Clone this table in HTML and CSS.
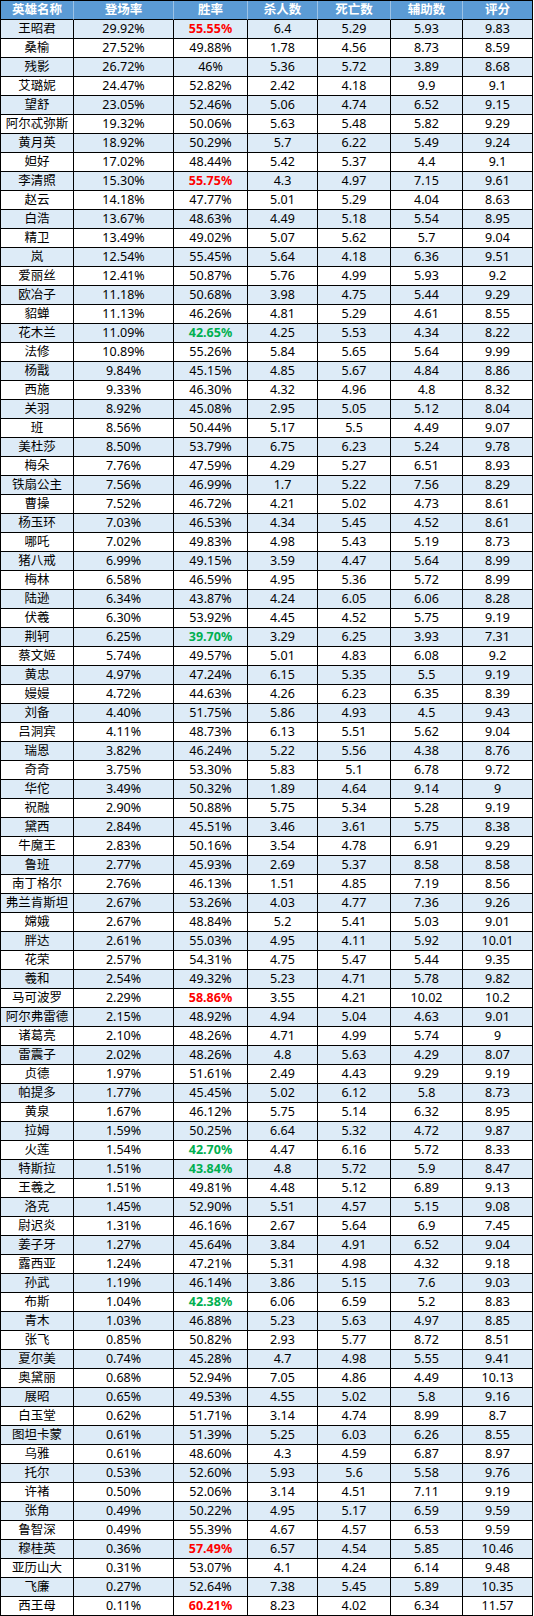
FILE: index.html
```html
<!DOCTYPE html>
<html lang="zh-CN">
<head>
<meta charset="utf-8">
<title>英雄数据</title>
<link rel="stylesheet" href="styles.css">
</head>
<body>
<div class="sheet">
<div class="row head"><div>英雄名称</div><div>登场率</div><div>胜率</div><div>杀人数</div><div>死亡数</div><div>辅助数</div><div>评分</div></div>
<div class="row alt"><div>王昭君</div><div>29.92%</div><div class="up">55.55%</div><div>6.4</div><div>5.29</div><div>5.93</div><div>9.83</div></div>
<div class="row"><div>桑榆</div><div>27.52%</div><div>49.88%</div><div>1.78</div><div>4.56</div><div>8.73</div><div>8.59</div></div>
<div class="row alt"><div>残影</div><div>26.72%</div><div>46%</div><div>5.36</div><div>5.72</div><div>3.89</div><div>8.68</div></div>
<div class="row"><div>艾璐妮</div><div>24.47%</div><div>52.82%</div><div>2.42</div><div>4.18</div><div>9.9</div><div>9.1</div></div>
<div class="row alt"><div>望舒</div><div>23.05%</div><div>52.46%</div><div>5.06</div><div>4.74</div><div>6.52</div><div>9.15</div></div>
<div class="row"><div>阿尔忒弥斯</div><div>19.32%</div><div>50.06%</div><div>5.63</div><div>5.48</div><div>5.82</div><div>9.29</div></div>
<div class="row alt"><div>黄月英</div><div>18.92%</div><div>50.29%</div><div>5.7</div><div>6.22</div><div>5.49</div><div>9.24</div></div>
<div class="row"><div>妲好</div><div>17.02%</div><div>48.44%</div><div>5.42</div><div>5.37</div><div>4.4</div><div>9.1</div></div>
<div class="row alt"><div>李清照</div><div>15.30%</div><div class="up">55.75%</div><div>4.3</div><div>4.97</div><div>7.15</div><div>9.61</div></div>
<div class="row"><div>赵云</div><div>14.18%</div><div>47.77%</div><div>5.01</div><div>5.29</div><div>4.04</div><div>8.63</div></div>
<div class="row alt"><div>白浩</div><div>13.67%</div><div>48.63%</div><div>4.49</div><div>5.18</div><div>5.54</div><div>8.95</div></div>
<div class="row"><div>精卫</div><div>13.49%</div><div>49.02%</div><div>5.07</div><div>5.62</div><div>5.7</div><div>9.04</div></div>
<div class="row alt"><div>岚</div><div>12.54%</div><div>55.45%</div><div>5.64</div><div>4.18</div><div>6.36</div><div>9.51</div></div>
<div class="row"><div>爱丽丝</div><div>12.41%</div><div>50.87%</div><div>5.76</div><div>4.99</div><div>5.93</div><div>9.2</div></div>
<div class="row alt"><div>欧冶子</div><div>11.18%</div><div>50.68%</div><div>3.98</div><div>4.75</div><div>5.44</div><div>9.29</div></div>
<div class="row"><div>貂蝉</div><div>11.13%</div><div>46.26%</div><div>4.81</div><div>5.29</div><div>4.61</div><div>8.55</div></div>
<div class="row alt"><div>花木兰</div><div>11.09%</div><div class="down">42.65%</div><div>4.25</div><div>5.53</div><div>4.34</div><div>8.22</div></div>
<div class="row"><div>法修</div><div>10.89%</div><div>55.26%</div><div>5.84</div><div>5.65</div><div>5.64</div><div>9.99</div></div>
<div class="row alt"><div>杨戬</div><div>9.84%</div><div>45.15%</div><div>4.85</div><div>5.67</div><div>4.84</div><div>8.86</div></div>
<div class="row"><div>西施</div><div>9.33%</div><div>46.30%</div><div>4.32</div><div>4.96</div><div>4.8</div><div>8.32</div></div>
<div class="row alt"><div>关羽</div><div>8.92%</div><div>45.08%</div><div>2.95</div><div>5.05</div><div>5.12</div><div>8.04</div></div>
<div class="row"><div>班</div><div>8.56%</div><div>50.44%</div><div>5.17</div><div>5.5</div><div>4.49</div><div>9.07</div></div>
<div class="row alt"><div>美杜莎</div><div>8.50%</div><div>53.79%</div><div>6.75</div><div>6.23</div><div>5.24</div><div>9.78</div></div>
<div class="row"><div>梅朵</div><div>7.76%</div><div>47.59%</div><div>4.29</div><div>5.27</div><div>6.51</div><div>8.93</div></div>
<div class="row alt"><div>铁扇公主</div><div>7.56%</div><div>46.99%</div><div>1.7</div><div>5.22</div><div>7.56</div><div>8.29</div></div>
<div class="row"><div>曹操</div><div>7.52%</div><div>46.72%</div><div>4.21</div><div>5.02</div><div>4.73</div><div>8.61</div></div>
<div class="row alt"><div>杨玉环</div><div>7.03%</div><div>46.53%</div><div>4.34</div><div>5.45</div><div>4.52</div><div>8.61</div></div>
<div class="row"><div>哪吒</div><div>7.02%</div><div>49.83%</div><div>4.98</div><div>5.43</div><div>5.19</div><div>8.73</div></div>
<div class="row alt"><div>猪八戒</div><div>6.99%</div><div>49.15%</div><div>3.59</div><div>4.47</div><div>5.64</div><div>8.99</div></div>
<div class="row"><div>梅林</div><div>6.58%</div><div>46.59%</div><div>4.95</div><div>5.36</div><div>5.72</div><div>8.99</div></div>
<div class="row alt"><div>陆逊</div><div>6.34%</div><div>43.87%</div><div>4.24</div><div>6.05</div><div>6.06</div><div>8.28</div></div>
<div class="row"><div>伏羲</div><div>6.30%</div><div>53.92%</div><div>4.45</div><div>4.52</div><div>5.75</div><div>9.19</div></div>
<div class="row alt"><div>荆轲</div><div>6.25%</div><div class="down">39.70%</div><div>3.29</div><div>6.25</div><div>3.93</div><div>7.31</div></div>
<div class="row"><div>蔡文姬</div><div>5.74%</div><div>49.57%</div><div>5.01</div><div>4.83</div><div>6.08</div><div>9.2</div></div>
<div class="row alt"><div>黄忠</div><div>4.97%</div><div>47.24%</div><div>6.15</div><div>5.35</div><div>5.5</div><div>9.19</div></div>
<div class="row"><div>嫚嫚</div><div>4.72%</div><div>44.63%</div><div>4.26</div><div>6.23</div><div>6.35</div><div>8.39</div></div>
<div class="row alt"><div>刘备</div><div>4.40%</div><div>51.75%</div><div>5.86</div><div>4.93</div><div>4.5</div><div>9.43</div></div>
<div class="row"><div>吕洞宾</div><div>4.11%</div><div>48.73%</div><div>6.13</div><div>5.51</div><div>5.62</div><div>9.04</div></div>
<div class="row alt"><div>瑞恩</div><div>3.82%</div><div>46.24%</div><div>5.22</div><div>5.56</div><div>4.38</div><div>8.76</div></div>
<div class="row"><div>奇奇</div><div>3.75%</div><div>53.30%</div><div>5.83</div><div>5.1</div><div>6.78</div><div>9.72</div></div>
<div class="row alt"><div>华佗</div><div>3.49%</div><div>50.32%</div><div>1.89</div><div>4.64</div><div>9.14</div><div>9</div></div>
<div class="row"><div>祝融</div><div>2.90%</div><div>50.88%</div><div>5.75</div><div>5.34</div><div>5.28</div><div>9.19</div></div>
<div class="row alt"><div>黛西</div><div>2.84%</div><div>45.51%</div><div>3.46</div><div>3.61</div><div>5.75</div><div>8.38</div></div>
<div class="row"><div>牛魔王</div><div>2.83%</div><div>50.16%</div><div>3.54</div><div>4.78</div><div>6.91</div><div>9.29</div></div>
<div class="row alt"><div>鲁班</div><div>2.77%</div><div>45.93%</div><div>2.69</div><div>5.37</div><div>8.58</div><div>8.58</div></div>
<div class="row"><div>南丁格尔</div><div>2.76%</div><div>46.13%</div><div>1.51</div><div>4.85</div><div>7.19</div><div>8.56</div></div>
<div class="row alt"><div>弗兰肯斯坦</div><div>2.67%</div><div>53.26%</div><div>4.03</div><div>4.77</div><div>7.36</div><div>9.26</div></div>
<div class="row"><div>嫦娥</div><div>2.67%</div><div>48.84%</div><div>5.2</div><div>5.41</div><div>5.03</div><div>9.01</div></div>
<div class="row alt"><div>胖达</div><div>2.61%</div><div>55.03%</div><div>4.95</div><div>4.11</div><div>5.92</div><div>10.01</div></div>
<div class="row"><div>花荣</div><div>2.57%</div><div>54.31%</div><div>4.75</div><div>5.47</div><div>5.44</div><div>9.35</div></div>
<div class="row alt"><div>羲和</div><div>2.54%</div><div>49.32%</div><div>5.23</div><div>4.71</div><div>5.78</div><div>9.82</div></div>
<div class="row"><div>马可波罗</div><div>2.29%</div><div class="up">58.86%</div><div>3.55</div><div>4.21</div><div>10.02</div><div>10.2</div></div>
<div class="row alt"><div>阿尔弗雷德</div><div>2.15%</div><div>48.92%</div><div>4.94</div><div>5.04</div><div>4.63</div><div>9.01</div></div>
<div class="row"><div>诸葛亮</div><div>2.10%</div><div>48.26%</div><div>4.71</div><div>4.99</div><div>5.74</div><div>9</div></div>
<div class="row alt"><div>雷震子</div><div>2.02%</div><div>48.26%</div><div>4.8</div><div>5.63</div><div>4.29</div><div>8.07</div></div>
<div class="row"><div>贞德</div><div>1.97%</div><div>51.61%</div><div>2.49</div><div>4.43</div><div>9.29</div><div>9.19</div></div>
<div class="row alt"><div>帕提多</div><div>1.77%</div><div>45.45%</div><div>5.02</div><div>6.12</div><div>5.8</div><div>8.73</div></div>
<div class="row"><div>黄泉</div><div>1.67%</div><div>46.12%</div><div>5.75</div><div>5.14</div><div>6.32</div><div>8.95</div></div>
<div class="row alt"><div>拉姆</div><div>1.59%</div><div>50.25%</div><div>6.64</div><div>5.32</div><div>4.72</div><div>9.87</div></div>
<div class="row"><div>火莲</div><div>1.54%</div><div class="down">42.70%</div><div>4.47</div><div>6.16</div><div>5.72</div><div>8.33</div></div>
<div class="row alt"><div>特斯拉</div><div>1.51%</div><div class="down">43.84%</div><div>4.8</div><div>5.72</div><div>5.9</div><div>8.47</div></div>
<div class="row"><div>王羲之</div><div>1.51%</div><div>49.81%</div><div>4.48</div><div>5.12</div><div>6.89</div><div>9.13</div></div>
<div class="row alt"><div>洛克</div><div>1.45%</div><div>52.90%</div><div>5.51</div><div>4.57</div><div>5.15</div><div>9.08</div></div>
<div class="row"><div>尉迟炎</div><div>1.31%</div><div>46.16%</div><div>2.67</div><div>5.64</div><div>6.9</div><div>7.45</div></div>
<div class="row alt"><div>姜子牙</div><div>1.27%</div><div>45.64%</div><div>3.84</div><div>4.91</div><div>6.52</div><div>9.04</div></div>
<div class="row"><div>露西亚</div><div>1.24%</div><div>47.21%</div><div>5.31</div><div>4.98</div><div>4.32</div><div>9.18</div></div>
<div class="row alt"><div>孙武</div><div>1.19%</div><div>46.14%</div><div>3.86</div><div>5.15</div><div>7.6</div><div>9.03</div></div>
<div class="row"><div>布斯</div><div>1.04%</div><div class="down">42.38%</div><div>6.06</div><div>6.59</div><div>5.2</div><div>8.83</div></div>
<div class="row alt"><div>青木</div><div>1.03%</div><div>46.88%</div><div>5.23</div><div>5.63</div><div>4.97</div><div>8.85</div></div>
<div class="row"><div>张飞</div><div>0.85%</div><div>50.82%</div><div>2.93</div><div>5.77</div><div>8.72</div><div>8.51</div></div>
<div class="row alt"><div>夏尔美</div><div>0.74%</div><div>45.28%</div><div>4.7</div><div>4.98</div><div>5.55</div><div>9.41</div></div>
<div class="row"><div>奥黛丽</div><div>0.68%</div><div>52.94%</div><div>7.05</div><div>4.86</div><div>4.49</div><div>10.13</div></div>
<div class="row alt"><div>展昭</div><div>0.65%</div><div>49.53%</div><div>4.55</div><div>5.02</div><div>5.8</div><div>9.16</div></div>
<div class="row"><div>白玉堂</div><div>0.62%</div><div>51.71%</div><div>3.14</div><div>4.74</div><div>8.99</div><div>8.7</div></div>
<div class="row alt"><div>图坦卡蒙</div><div>0.61%</div><div>51.39%</div><div>5.25</div><div>6.03</div><div>6.26</div><div>8.55</div></div>
<div class="row"><div>乌雅</div><div>0.61%</div><div>48.60%</div><div>4.3</div><div>4.59</div><div>6.87</div><div>8.97</div></div>
<div class="row alt"><div>托尔</div><div>0.53%</div><div>52.60%</div><div>5.93</div><div>5.6</div><div>5.58</div><div>9.76</div></div>
<div class="row"><div>许褚</div><div>0.50%</div><div>52.06%</div><div>3.14</div><div>4.51</div><div>7.11</div><div>9.19</div></div>
<div class="row alt"><div>张角</div><div>0.49%</div><div>50.22%</div><div>4.95</div><div>5.17</div><div>6.59</div><div>9.59</div></div>
<div class="row"><div>鲁智深</div><div>0.49%</div><div>55.39%</div><div>4.67</div><div>4.57</div><div>6.53</div><div>9.59</div></div>
<div class="row alt"><div>穆桂英</div><div>0.36%</div><div class="up">57.49%</div><div>6.57</div><div>4.54</div><div>5.85</div><div>10.46</div></div>
<div class="row"><div>亚历山大</div><div>0.31%</div><div>53.07%</div><div>4.1</div><div>4.24</div><div>6.14</div><div>9.48</div></div>
<div class="row alt"><div>飞廉</div><div>0.27%</div><div>52.64%</div><div>7.38</div><div>5.45</div><div>5.89</div><div>10.35</div></div>
<div class="row"><div>西王母</div><div>0.11%</div><div class="up">60.21%</div><div>8.23</div><div>4.02</div><div>6.34</div><div>11.57</div></div>
</div>
</body>
</html>
```

FILE: styles.css
```css
html, body {
  margin: 0;
  padding: 0;
  background: #ffffff;
}

.sheet {
  width: 533px;
  box-sizing: border-box;
  border-left: 1px solid #000;
  border-top: 1px solid #000;
  font-family: "Noto Sans", "Noto Sans CJK SC", sans-serif;
  font-size: 12.5px;
  color: #000;
}

.row {
  display: grid;
  grid-template-columns: 73px 100px 74px 70px 73px 72px 70px;
  height: 19px;
}

.row > div {
  box-sizing: border-box;
  height: 19px;
  border-right: 1px solid #000;
  border-bottom: 1px solid #000;
  display: flex;
  align-items: center;
  justify-content: center;
  line-height: 18px;
  white-space: nowrap;
  overflow: hidden;
}

.row.alt {
  background: #ddebf7;
}

.row.head {
  background: #5b9bd5;
  color: #ffffff;
  font-weight: 700;
}

.row.head > div {
  border-right-color: #9dc3e6;
}

.row.head > div:last-child {
  border-right-color: #000;
}

.up {
  color: #ff0000;
  font-weight: 700;
}

.down {
  color: #00b050;
  font-weight: 700;
}
```
